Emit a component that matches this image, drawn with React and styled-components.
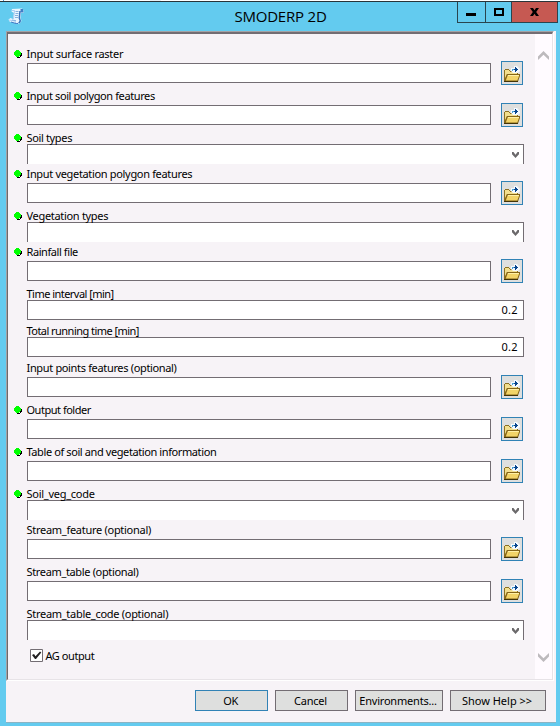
import React from "react";
import styled, { createGlobalStyle } from "styled-components";

const Global = createGlobalStyle`
  * { box-sizing: border-box; }
  body { margin: 0; background: #63cbef; overflow: hidden; }
`;

const Window = styled.div`
  width: 560px;
  height: 726px;
  display: flex;
  flex-direction: column;
  background: #63cbef;
  color: #000;
  font: 11px/18px "Noto Sans", "Open Sans", sans-serif;
`;

const Backdrop = styled.div`
  height: 2px;
  flex: none;
  background: linear-gradient(90deg, #fff 3px, #4a9ad8 3px 4px, #fff 4px 150px, #e8f0f4 150px 161px, #fff 161px);
  border-bottom: 1px solid #293439;
`;

const TitleBar = styled.header`
  height: 29px;
  flex: none;
  display: grid;
  grid-template-columns: 104px 1fr 103px;
`;

const AppIcon = styled.svg`
  width: 16px;
  height: 16px;
  margin: 6px 0 0 8px;
`;

const Title = styled.h1`
  margin: 0;
  text-align: center;
  font: 400 15px/29px "Open Sans", "Noto Sans", sans-serif;
  letter-spacing: ${(p) => p.$spacing}px;
  white-space: nowrap;
`;

const Controls = styled.div`
  display: flex;
  height: 21px;
  width: 101px;
  border: 1px solid #29454f;
  border-top: 0;
`;

const ControlButton = styled.button`
  width: ${(p) => p.$width}px;
  padding: 0;
  border: 0;
  border-right: ${(p) => (p.$last ? "0" : "1px solid #29454f")};
  background: ${(p) => (p.$close ? "#c65952" : "transparent")};

  svg { display: block; }
`;

const Dialog = styled.main`
  flex: none;
  width: 550px;
  height: 692px;
  margin-left: 6px;
  background: #f7f3f7;
  border-bottom: 1px solid #8ab4c4;
`;

const Panel = styled.section`
  height: 650px;
  display: flex;
  width: 548px;
  border: 1px solid #a5a2a5;
  border-right-color: #fff;
  border-bottom-color: #fff;
`;

const PanelInner = styled.div`
  flex: 1;
  display: flex;
  border: 1px solid #6b696b;
  border-top-width: 2px;
  border-top-color: #736d73;
  border-right-color: #e7e3e7;
  border-bottom-color: #e7e3e7;
`;

const Form = styled.form`
  flex: 1;
  padding: 11px 0 0 4px;
`;

const ScrollTrack = styled.div`
  width: 17px;
  background: #fffbff;
  display: flex;
  flex-direction: column;
  justify-content: space-between;
  align-items: center;
  padding: 17px 0;

  svg { display: block; }
`;

const heights = { file: 42, combo: 36, value: 37 };

const Field = styled.div`
  height: ${(p) => heights[p.$kind]}px;
  display: grid;
  grid-template-columns: 15px 1fr;
  grid-template-rows: ${(p) => (p.$kind === "file" ? 18 : 15)}px 24px;
`;

const Marker = styled.div`
  padding: 5px 0 0 2px;
  svg { display: block; }
`;

const Label = styled.label`
  z-index: 1;
  margin-left: -0.5px;
  white-space: nowrap;
  letter-spacing: ${(p) => p.$spacing}px;
`;

const ControlRow = styled.div`
  grid-column: 2;
  display: flex;
  align-items: flex-start;
  gap: 10px;
`;

const TextBox = styled.div`
  width: ${(p) => (p.$wide ? 497 : 464)}px;
  height: 20px;
  background: #fff;
  border: 1px solid #736d73;
  padding-right: 5px;
  text-align: right;
  letter-spacing: 0.35px;
`;

const Combo = styled.div`
  width: 497px;
  height: 20px;
  background: #fff;
  border: 1px solid #736d73;
  border-bottom: 0;
  display: flex;
  justify-content: flex-end;
  padding: 7px 4px 0 0;

  svg { display: block; }
`;

const BrowseButton = styled.button`
  width: 22px;
  height: 24px;
  margin-top: -2px;
  padding: 0;
  background: #dedfde;
  border: 1px solid #3182b5;

  svg { display: block; margin: 3px 0 0 2px; }
`;

const CheckRow = styled.div`
  display: flex;
  padding: 8px 0 0 18px;
  gap: 3px;
`;

const CheckBox = styled.svg`
  width: 13px;
  height: 13px;
  flex: none;
`;

const CheckLabel = styled(Label)`
  line-height: 14px;
`;

const Footer = styled.footer`
  display: flex;
  justify-content: flex-end;
  gap: 7px;
  padding: 9px 10px 0 0;
`;

const ActionButton = styled.button`
  width: ${(p) => p.$width}px;
  height: 21px;
  padding: 0 2px 0 0;
  background: #dedfde;
  border: 1px solid ${(p) => (p.$primary ? "#3182b5" : "#736d73")};
  color: #000;
  font: 11px/19px "Noto Sans", "Open Sans", sans-serif;
  letter-spacing: ${(p) => p.$spacing}px;
  white-space: nowrap;
`;

const Dot = () => (
  <svg width="8" height="8" shapeRendering="crispEdges">
    <path d="M6 2h1v1h1v3h-1v1h-1v1h-3v-1h3z" fill="#000" />
    <path d="M2 0h3v1h1v1h1v3h-1v1h-1v1h-3v-1h-1v-1h-1v-3h1v-1h1z" fill="#00ff00" />
  </svg>
);

const FolderIcon = () => (
  <svg width="17" height="17" viewBox="0 0 17 17">
    <path d="M0 4h1V3h4v1h1v1h8v4H3L1 16H0z" fill="#8c7121" />
    <path d="M1 4h4v1h1v1h7v2H3L1 13z" fill="#f2df8e" />
    <path d="M7 2h3V0h3l3 3v2l-2 2H9L7 5z" fill="#f4faff" />
    <path d="M3 8h13v2l-2 5.500H0V15z" fill="#846518" />
    <path d="M3.800 9H15v1l-1.700 4.500H1.800z" fill="#f2d468" />
    <path d="M4 9.500h11" stroke="#fff0a5" />
    <path d="M0 15h14v1H0z" fill="#423408" />
    <path d="M8 3h2v1H9v1H8z" fill="#4aa2d6" />
    <path d="M10 3h1V1h1v1h1v1h1v1h-1v1h-1v1h-1V4h-1z" fill="#08458c" />
  </svg>
);

const ComboArrow = () => (
  <svg width="8" height="7">
    <path d="M1 0h1.500l2 2.800 2-2.800H8v2.200L4.500 6 1 2.200z" fill="#6b696b" />
  </svg>
);

const ScrollArrow = ({ down }) => (
  <svg width="11" height="9">
    <path d={down ? "M0 0l5.5 5.3L11 0v3.5L5.5 9 0 3.5z" : "M0 9l5.5-5.3L11 9V5.5L5.5 0 0 5.5z"} fill="#bdbabd" />
  </svg>
);

const fields = [
  { label: "Input surface raster", kind: "file", required: true, spacing: -0.28 },
  { label: "Input soil polygon features", kind: "file", required: true, spacing: -0.4 },
  { label: "Soil types", kind: "combo", required: true, spacing: -0.35 },
  { label: "Input vegetation polygon features", kind: "file", required: true, spacing: -0.33 },
  { label: "Vegetation types", kind: "combo", required: true, spacing: -0.31 },
  { label: "Rainfall file", kind: "file", required: true, spacing: -0.42 },
  { label: "Time interval [min]", kind: "value", value: "0.2", spacing: -0.53 },
  { label: "Total running time [min]", kind: "value", value: "0.2", spacing: -0.54 },
  { label: "Input points features (optional)", kind: "file", spacing: -0.34 },
  { label: "Output folder", kind: "file", required: true, spacing: -0.48 },
  { label: "Table of soil and vegetation information", kind: "file", required: true, spacing: -0.4 },
  { label: "Soil_veg_code", kind: "combo", required: true, spacing: -0.27 },
  { label: "Stream_feature (optional)", kind: "file", spacing: -0.28 },
  { label: "Stream_table (optional)", kind: "file", spacing: -0.35 },
  { label: "Stream_table_code (optional)", kind: "combo", spacing: -0.29 },
];

const FieldRow = ({ label, kind, required, value, spacing }) => (
  <Field $kind={kind}>
    <Marker>{required && <Dot />}</Marker>
    <Label $spacing={spacing}>{label}</Label>
    <ControlRow>
      {kind === "combo" ? <Combo><ComboArrow /></Combo> : <TextBox $wide={kind === "value"}>{value}</TextBox>}
      {kind === "file" && <BrowseButton type="button" aria-label="Browse"><FolderIcon /></BrowseButton>}
    </ControlRow>
  </Field>
);

export default function App() {
  return (
    <Window>
      <Global />
      <Backdrop />
      <TitleBar>
        <AppIcon viewBox="0 0 16 16">
          <path d="M4 1l10-.5 1.500 2V5H13l-.5 5 1 3-2 2.500L9 16 1.500 13.500.5 11.500l2-1.500L5 11 6 5 3.500 3.500z" fill="#eaf6ff" />
          <path d="M4 2.500h2.500L5.500 11M1 12l6 1 1 2.500" fill="none" stroke="#a9cdf2" />
          <path d="M12.500 1H15l.5 3.500h-3z" fill="#3f80c8" />
          <path d="M12 3l-.7 7 1 3-1.300 2" fill="none" stroke="#3a72ba" strokeWidth="1.500" />
          <path d="M7.500 3.500h3M7.500 5.500h3M7 7.500h3M7 9.500h3M4 12l4 .7" stroke="#86b1de" />
          <path d="M3 14l6 1.800 1.500-1" fill="none" stroke="#3a78c4" />
        </AppIcon>
        <Title $spacing={-0.2}>SMODERP 2D</Title>
        <Controls>
          <ControlButton $width={28} aria-label="Minimize">
            <svg width="27" height="20"><path d="M8 11h10v3H8z" /></svg>
          </ControlButton>
          <ControlButton $width={26} aria-label="Maximize">
            <svg width="25" height="20"><path d="M8 6h10v8H8zM10 8v4h6V8z" fillRule="evenodd" /></svg>
          </ControlButton>
          <ControlButton $width={45} $close $last aria-label="Close">
            <svg width="45" height="20"><path d="M18 6h3l1.500 2.300L24 6h3l-2.800 4 2.800 4h-3l-1.500-2.300L21 14h-3l2.800-4z" /></svg>
          </ControlButton>
        </Controls>
      </TitleBar>
      <Dialog>
        <Panel>
          <PanelInner>
            <Form>
              {fields.map((f) => <FieldRow key={f.label} {...f} />)}
              <CheckRow>
                <CheckBox viewBox="0 0 13 13">
                  <path d="M.5.5h12v12H.5z" fill="#fff" stroke="#736d73" />
                  <path d="M2 6l2-1 1.500 2.300L10 2.500l1.300 1L6 10H5z" fill="#212021" />
                </CheckBox>
                <CheckLabel $spacing={-0.44}>AG output</CheckLabel>
              </CheckRow>
            </Form>
            <ScrollTrack>
              <ScrollArrow />
              <ScrollArrow down />
            </ScrollTrack>
          </PanelInner>
        </Panel>
        <Footer>
          <ActionButton $width={73} $primary $spacing={-0.5}>OK</ActionButton>
          <ActionButton $width={73} $spacing={-0.2}>Cancel</ActionButton>
          <ActionButton $width={88} $spacing={-0.2}>Environments...</ActionButton>
          <ActionButton $width={96} $spacing={0}>Show Help &gt;&gt;</ActionButton>
        </Footer>
      </Dialog>
    </Window>
  );
}
